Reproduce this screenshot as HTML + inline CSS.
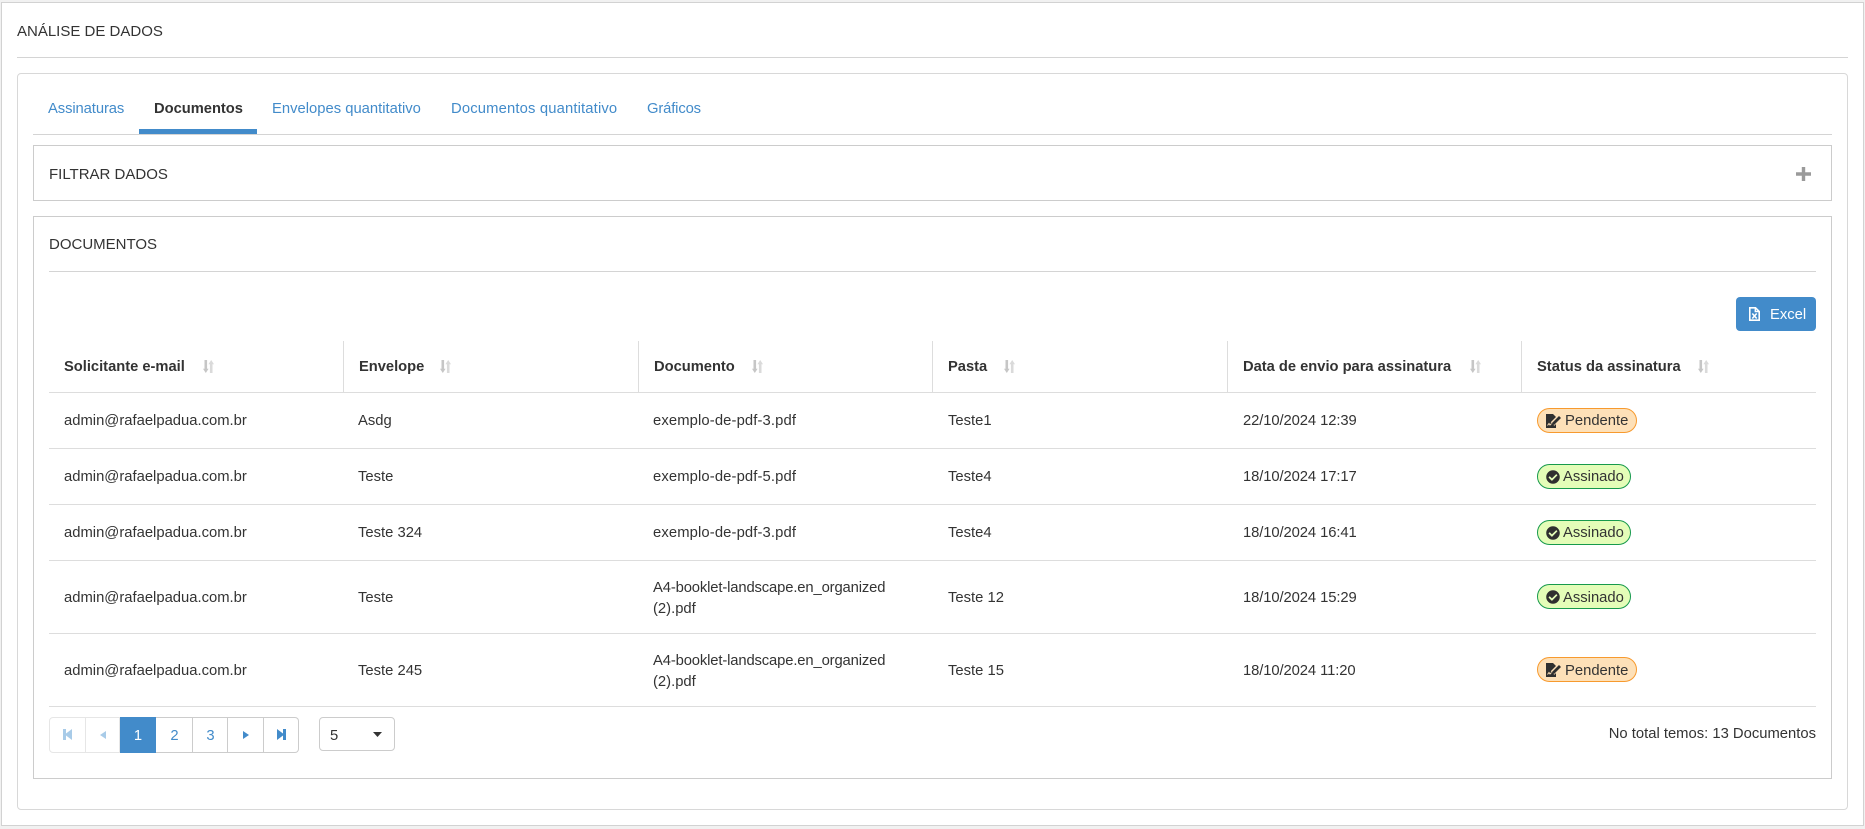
<!DOCTYPE html>
<html lang="pt-BR">
<head>
<meta charset="utf-8">
<title>Análise de Dados</title>
<style>
html,body{margin:0;padding:0;width:1865px;height:829px;overflow:hidden;background:#f1f1f1}
body{position:relative;font-family:"Liberation Sans",sans-serif;color:#333;font-size:14.8px}
.b{position:absolute;box-sizing:border-box;background:#fff}
.l{position:absolute;height:1px}
.v{position:absolute;width:1px;background:#ddd}
.t{position:absolute;white-space:nowrap;line-height:20px}
.h{font-size:15px}
.a{color:#428bca}
.s{font-weight:bold;font-size:14.7px}
.n1{letter-spacing:.12px}
.n2{letter-spacing:-.14px}
.n3{letter-spacing:-.1px}
svg{position:absolute;display:block}
.pill{position:absolute;box-sizing:border-box;height:25px;border-radius:13px;left:1537px}
.pe{width:100px;background:#fde0b8;border:1px solid #f79a2e}
.as{width:94px;background:#e4fdb8;border:1px solid #179a4c}
.pg{position:absolute;top:717px;height:36px;box-sizing:border-box;border:1px solid #ccc;background:#fff;border-left:0}
</style>
</head>
<body>
<div class="b" style="left:1px;top:2px;width:1863px;height:824px;border:1px solid #d2d2d2"></div>
<div class="t h" style="left:17px;top:22px">ANÁLISE DE DADOS</div>
<div class="l" style="left:17px;top:57px;width:1831px;background:#d4d4d4"></div>

<div class="b" style="left:17px;top:73px;width:1831px;height:737px;border:1px solid #d8d8d8;border-radius:4px"></div>

<div class="l" style="left:33px;top:134px;width:1799px;background:#d4d4d4"></div>
<div class="b" style="left:139px;top:129px;width:118px;height:5px;background:#428bca"></div>
<div class="t a" style="left:48px;top:99px;letter-spacing:-.1px">Assinaturas</div>
<div class="t s" style="left:154px;top:99px">Documentos</div>
<div class="t a" style="left:272px;top:99px">Envelopes quantitativo</div>
<div class="t a" style="left:451px;top:99px;letter-spacing:.15px">Documentos quantitativo</div>
<div class="t a" style="left:647px;top:99px;letter-spacing:-.15px">Gráficos</div>

<div class="b" style="left:33px;top:145px;width:1799px;height:56px;border:1px solid #ccc"></div>
<div class="t h" style="left:49px;top:164.500px">FILTRAR DADOS</div>
<svg style="left:1796px;top:167px" width="15" height="14" viewBox="0 0 15 14"><path d="M5.800 0h3.400v5.200H15v3.600H9.200V14H5.800V8.800H0V5.200h5.800z" fill="#9a9a9a"/></svg>

<div class="b" style="left:33px;top:216px;width:1799px;height:563px;border:1px solid #ccc"></div>
<div class="t h" style="left:49px;top:235px">DOCUMENTOS</div>
<div class="l" style="left:49px;top:271px;width:1767px;background:#d4d4d4"></div>

<div class="b" style="left:1736px;top:297px;width:80px;height:34px;background:#428bca;border-radius:4px"></div>
<svg style="left:1749px;top:307px" width="11" height="14" viewBox="0 0 11 14"><path d="M1.500.8h5l3.700 3.700v8.700H.8V.8z" fill="none" stroke="#fff" stroke-width="1.600"/><path d="M6.300.8v3.700h4" fill="none" stroke="#fff" stroke-width="1.400"/><path d="M3.300 6.500l4.400 5M7.700 6.500l-4.400 5" stroke="#fff" stroke-width="1.600"/></svg>
<div class="t" style="left:1770px;top:305px;color:#fff">Excel</div>

<div class="v" style="left:343px;top:341px;height:51px"></div>
<div class="v" style="left:638px;top:341px;height:51px"></div>
<div class="v" style="left:932px;top:341px;height:51px"></div>
<div class="v" style="left:1227px;top:341px;height:51px"></div>
<div class="v" style="left:1521px;top:341px;height:51px"></div>

<div class="l" style="left:49px;top:392px;width:1767px;background:#ddd"></div>
<div class="l" style="left:49px;top:448px;width:1767px;background:#ddd"></div>
<div class="l" style="left:49px;top:504px;width:1767px;background:#ddd"></div>
<div class="l" style="left:49px;top:560px;width:1767px;background:#ddd"></div>
<div class="l" style="left:49px;top:633px;width:1767px;background:#ddd"></div>
<div class="l" style="left:49px;top:706px;width:1767px;background:#ddd"></div>

<div class="t s" style="left:64px;top:357px">Solicitante e-mail</div>
<div class="t s" style="left:359px;top:357px">Envelope</div>
<div class="t s" style="left:654px;top:357px">Documento</div>
<div class="t s" style="left:948px;top:357px">Pasta</div>
<div class="t s" style="left:1243px;top:357px">Data de envio para assinatura</div>
<div class="t s" style="left:1537px;top:357px">Status da assinatura</div>

<svg style="left:203px;top:360px" width="11" height="13" viewBox="0 0 11 13"><path d="M1.500 0h2.600v8.800h1.500L2.800 13 0 8.800h1.500z" fill="#c6c6c6"/><path d="M8.200 0L11 4.200H9.500V13H6.900V4.200H5.400z" fill="#dadada"/></svg>
<svg style="left:440px;top:360px" width="11" height="13" viewBox="0 0 11 13"><path d="M1.500 0h2.600v8.800h1.500L2.800 13 0 8.800h1.500z" fill="#c6c6c6"/><path d="M8.200 0L11 4.200H9.500V13H6.900V4.200H5.400z" fill="#dadada"/></svg>
<svg style="left:752px;top:360px" width="11" height="13" viewBox="0 0 11 13"><path d="M1.500 0h2.600v8.800h1.500L2.800 13 0 8.800h1.500z" fill="#c6c6c6"/><path d="M8.200 0L11 4.200H9.500V13H6.900V4.200H5.400z" fill="#dadada"/></svg>
<svg style="left:1004px;top:360px" width="11" height="13" viewBox="0 0 11 13"><path d="M1.500 0h2.600v8.800h1.500L2.800 13 0 8.800h1.500z" fill="#c6c6c6"/><path d="M8.200 0L11 4.200H9.500V13H6.900V4.200H5.400z" fill="#dadada"/></svg>
<svg style="left:1470px;top:360px" width="11" height="13" viewBox="0 0 11 13"><path d="M1.500 0h2.600v8.800h1.500L2.800 13 0 8.800h1.500z" fill="#c6c6c6"/><path d="M8.200 0L11 4.200H9.500V13H6.900V4.200H5.400z" fill="#dadada"/></svg>
<svg style="left:1698px;top:360px" width="11" height="13" viewBox="0 0 11 13"><path d="M1.500 0h2.600v8.800h1.500L2.800 13 0 8.800h1.500z" fill="#c6c6c6"/><path d="M8.200 0L11 4.200H9.500V13H6.900V4.200H5.400z" fill="#dadada"/></svg>

<div class="t" style="left:64px;top:411px">admin@rafaelpadua.com.br</div>
<div class="t" style="left:358px;top:411px">Asdg</div>
<div class="t n1" style="left:653px;top:411px">exemplo-de-pdf-3.pdf</div>
<div class="t" style="left:948px;top:411px">Teste1</div>
<div class="t n3" style="left:1243px;top:411px">22/10/2024 12:39</div>

<div class="t" style="left:64px;top:467px">admin@rafaelpadua.com.br</div>
<div class="t" style="left:358px;top:467px">Teste</div>
<div class="t n1" style="left:653px;top:467px">exemplo-de-pdf-5.pdf</div>
<div class="t" style="left:948px;top:467px">Teste4</div>
<div class="t n3" style="left:1243px;top:467px">18/10/2024 17:17</div>

<div class="t" style="left:64px;top:523px">admin@rafaelpadua.com.br</div>
<div class="t" style="left:358px;top:523px">Teste 324</div>
<div class="t n1" style="left:653px;top:523px">exemplo-de-pdf-3.pdf</div>
<div class="t" style="left:948px;top:523px">Teste4</div>
<div class="t n3" style="left:1243px;top:523px">18/10/2024 16:41</div>

<div class="t" style="left:64px;top:588px">admin@rafaelpadua.com.br</div>
<div class="t" style="left:358px;top:588px">Teste</div>
<div class="t n2" style="left:653px;top:578px">A4-booklet-landscape.en_organized</div>
<div class="t" style="left:653px;top:599px">(2).pdf</div>
<div class="t" style="left:948px;top:588px">Teste 12</div>
<div class="t n3" style="left:1243px;top:588px">18/10/2024 15:29</div>

<div class="t" style="left:64px;top:661px">admin@rafaelpadua.com.br</div>
<div class="t" style="left:358px;top:661px">Teste 245</div>
<div class="t n2" style="left:653px;top:651px">A4-booklet-landscape.en_organized</div>
<div class="t" style="left:653px;top:672px">(2).pdf</div>
<div class="t" style="left:948px;top:661px">Teste 15</div>
<div class="t n3" style="left:1243px;top:661px">18/10/2024 11:20</div>

<!-- badges -->
<div class="pill pe" style="top:408px"></div>
<svg style="left:1546px;top:414px" width="16" height="14" viewBox="0 0 16 14"><path d="M0 0h7l3 3v11H0z" fill="#2f2f2f"/><path d="M1.500 11.500l1.500-2 1 1.500 1.500-1.500" fill="none" stroke="#fde0b8" stroke-width="1"/><path d="M6.500 10l7.500-7.500" stroke="#fde0b8" stroke-width="5"/><path d="M7 10l7-7" stroke="#2f2f2f" stroke-width="2.800"/><path d="M5 12l1-3 2 2z" fill="#2f2f2f"/></svg>
<div class="t" style="left:1565px;top:411px">Pendente</div>

<div class="pill as" style="top:464px"></div>
<svg style="left:1545.500px;top:469.500px" width="14" height="14" viewBox="0 0 512 512"><path fill="#2f2f2f" d="M504 256c0 136.967-111.033 248-248 248S8 392.967 8 256 119.033 8 256 8s248 111.033 248 248zM227.314 387.314l184-184c6.248-6.248 6.248-16.379 0-22.627l-22.627-22.627c-6.248-6.249-16.379-6.249-22.628 0L216 308.118l-70.059-70.059c-6.248-6.248-16.379-6.248-22.628 0l-22.627 22.627c-6.248 6.248-6.248 16.379 0 22.627l104 104c6.249 6.249 16.379 6.249 22.628.001z"/></svg>
<div class="t" style="left:1563px;top:467px">Assinado</div>

<div class="pill as" style="top:520px"></div>
<svg style="left:1545.500px;top:525.500px" width="14" height="14" viewBox="0 0 512 512"><path fill="#2f2f2f" d="M504 256c0 136.967-111.033 248-248 248S8 392.967 8 256 119.033 8 256 8s248 111.033 248 248zM227.314 387.314l184-184c6.248-6.248 6.248-16.379 0-22.627l-22.627-22.627c-6.248-6.249-16.379-6.249-22.628 0L216 308.118l-70.059-70.059c-6.248-6.248-16.379-6.248-22.628 0l-22.627 22.627c-6.248 6.248-6.248 16.379 0 22.627l104 104c6.249 6.249 16.379 6.249 22.628.001z"/></svg>
<div class="t" style="left:1563px;top:523px">Assinado</div>

<div class="pill as" style="top:584px"></div>
<svg style="left:1545.500px;top:589.500px" width="14" height="14" viewBox="0 0 512 512"><path fill="#2f2f2f" d="M504 256c0 136.967-111.033 248-248 248S8 392.967 8 256 119.033 8 256 8s248 111.033 248 248zM227.314 387.314l184-184c6.248-6.248 6.248-16.379 0-22.627l-22.627-22.627c-6.248-6.249-16.379-6.249-22.628 0L216 308.118l-70.059-70.059c-6.248-6.248-16.379-6.248-22.628 0l-22.627 22.627c-6.248 6.248-6.248 16.379 0 22.627l104 104c6.249 6.249 16.379 6.249 22.628.001z"/></svg>
<div class="t" style="left:1563px;top:588px">Assinado</div>

<div class="pill pe" style="top:657px"></div>
<svg style="left:1546px;top:663px" width="16" height="14" viewBox="0 0 16 14"><path d="M0 0h7l3 3v11H0z" fill="#2f2f2f"/><path d="M1.500 11.500l1.500-2 1 1.500 1.500-1.500" fill="none" stroke="#fde0b8" stroke-width="1"/><path d="M6.500 10l7.500-7.500" stroke="#fde0b8" stroke-width="5"/><path d="M7 10l7-7" stroke="#2f2f2f" stroke-width="2.800"/><path d="M5 12l1-3 2 2z" fill="#2f2f2f"/></svg>
<div class="t" style="left:1565px;top:661px">Pendente</div>

<!-- pagination -->
<div class="pg" style="left:49px;width:37px;border-left:1px solid #e6e6e6;border-color:#e6e6e6;border-radius:4px 0 0 4px"></div>
<div class="pg" style="left:86px;width:34px;border-color:#e6e6e6"></div>
<div class="pg" style="left:120px;width:36px;background:#428bca;border-color:#428bca"></div>
<div class="pg" style="left:156px;width:37px"></div>
<div class="pg" style="left:193px;width:35px"></div>
<div class="pg" style="left:228px;width:36px"></div>
<div class="pg" style="left:264px;width:35px;border-radius:0 4px 4px 0"></div>

<svg style="left:63px;top:729px" width="9" height="11" viewBox="0 0 9 11"><path d="M0 0h3v4.500L9 0v11L3 6.500V11H0z" fill="#a8cbe8"/></svg>
<svg style="left:100px;top:731px" width="6" height="8" viewBox="0 0 6 8"><path d="M6 0v8L0 4z" fill="#a8cbe8"/></svg>
<div class="t" style="left:120px;top:725.500px;width:36px;text-align:center;color:#fff">1</div>
<div class="t a" style="left:156px;top:725.500px;width:37px;text-align:center">2</div>
<div class="t a" style="left:193px;top:725.500px;width:35px;text-align:center">3</div>
<svg style="left:243px;top:731px" width="6" height="8" viewBox="0 0 6 8"><path d="M0 0v8l6-4z" fill="#428bca"/></svg>
<svg style="left:277px;top:729px" width="9" height="11" viewBox="0 0 9 11"><path d="M9 0H6v4.500L0 0v11l6-4.500V11h3z" fill="#428bca"/></svg>

<div class="b" style="left:319px;top:717px;width:76px;height:34px;border:1px solid #ccc;border-radius:4px"></div>
<div class="t" style="left:330px;top:725.500px">5</div>
<svg style="left:373px;top:732px" width="9" height="5" viewBox="0 0 9 5"><path d="M0 0h9L4.500 5z" fill="#333"/></svg>

<div class="t" style="right:49px;top:724px">No total temos: 13 Documentos</div>
</body>
</html>
